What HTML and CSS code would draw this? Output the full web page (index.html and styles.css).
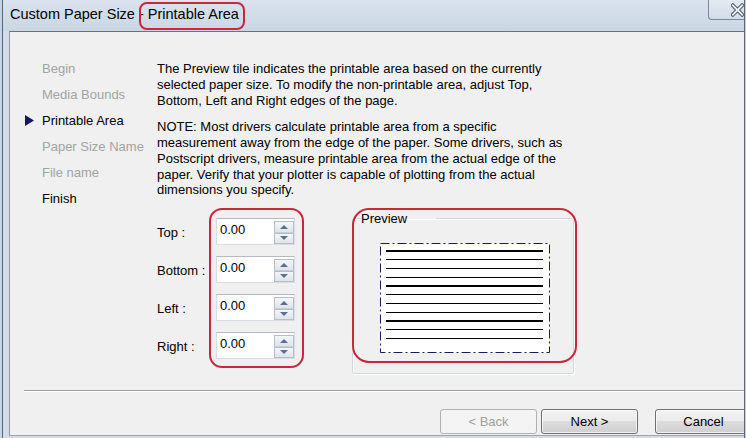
FILE: index.html
```html
<!DOCTYPE html>
<html>
<head>
<meta charset="utf-8">
<link rel="stylesheet" href="styles.css">
</head>
<body>
<div class="window">
  <div class="titlebar">
    <span class="title">Custom Paper Size - Printable Area</span>
    <div class="close-btn">
      <svg width="14" height="14" viewBox="0 0 14 14">
        <path d="M2 2 L12 12 M12 2 L2 12" stroke="#4a5562" stroke-width="4" stroke-linecap="square" fill="none"/>
        <path d="M2 2 L12 12 M12 2 L2 12" stroke="#f2f5f9" stroke-width="2" stroke-linecap="square" fill="none"/>
      </svg>
    </div>
  </div>
  <div class="client">
    <div class="main">
      <ul class="nav">
        <li class="nav-item disabled"><span class="marker"></span>Begin</li>
        <li class="nav-item disabled"><span class="marker"></span>Media Bounds</li>
        <li class="nav-item active"><span class="marker"><svg width="9" height="11" viewBox="0 0 9 11"><path d="M0 0 L9 5.5 L0 11 Z" fill="#16166a"/></svg></span>Printable Area</li>
        <li class="nav-item disabled"><span class="marker"></span>Paper Size Name</li>
        <li class="nav-item disabled"><span class="marker"></span>File name</li>
        <li class="nav-item"><span class="marker"></span>Finish</li>
      </ul>
      <div class="content">
        <p class="para">The Preview tile indicates the printable area based on the currently selected paper size. To modify the non-printable area, adjust Top, Bottom, Left and Right edges of the page.</p>
        <p class="para note">NOTE: Most drivers calculate printable area from a specific measurement away from the edge of the paper. Some drivers, such as Postscript drivers, measure printable area from the actual edge of the paper. Verify that your plotter is capable of plotting from the actual dimensions you specify.</p>
        <div class="settings">
          <div class="fields">
            <div class="field-row">
              <span class="field-label">Top :</span>
              <div class="spin-field"><span class="spin-value">0.00</span><span class="spinner"><span class="spin-btn up"></span><span class="spin-btn down"></span></span></div>
            </div>
            <div class="field-row">
              <span class="field-label">Bottom :</span>
              <div class="spin-field"><span class="spin-value">0.00</span><span class="spinner"><span class="spin-btn up"></span><span class="spin-btn down"></span></span></div>
            </div>
            <div class="field-row">
              <span class="field-label">Left :</span>
              <div class="spin-field"><span class="spin-value">0.00</span><span class="spinner"><span class="spin-btn up"></span><span class="spin-btn down"></span></span></div>
            </div>
            <div class="field-row">
              <span class="field-label">Right :</span>
              <div class="spin-field"><span class="spin-value">0.00</span><span class="spinner"><span class="spin-btn up"></span><span class="spin-btn down"></span></span></div>
            </div>
          </div>
          <fieldset class="preview">
            <legend class="preview-legend">Preview</legend>
            <svg class="page" width="170" height="110" viewBox="0 0 170 110">
              <rect x="0" y="0" width="170" height="110" fill="#ffffff"/>
              <rect x="0.5" y="0.5" width="169" height="109" fill="none" stroke="#1c1c58" stroke-width="1" stroke-dasharray="9 3 2 3"/>
              <g stroke="#000" fill="none">
                <line x1="6" y1="8" x2="163" y2="8" stroke-width="2"/>
                <line x1="6" y1="16.5" x2="163" y2="16.5" stroke-width="1"/>
                <line x1="6" y1="25.5" x2="163" y2="25.5" stroke-width="1"/>
                <line x1="6" y1="34.5" x2="163" y2="34.5" stroke-width="1"/>
                <line x1="6" y1="43" x2="163" y2="43" stroke-width="2"/>
                <line x1="6" y1="51.5" x2="163" y2="51.5" stroke-width="1"/>
                <line x1="6" y1="60.5" x2="163" y2="60.5" stroke-width="1"/>
                <line x1="6" y1="69.5" x2="163" y2="69.5" stroke-width="1"/>
                <line x1="6" y1="78" x2="163" y2="78" stroke-width="2"/>
                <line x1="6" y1="86.5" x2="163" y2="86.5" stroke-width="1"/>
                <line x1="6" y1="95.5" x2="163" y2="95.5" stroke-width="1"/>
              </g>
            </svg>
          </fieldset>
        </div>
      </div>
    </div>
    <div class="separator"></div>
    <div class="buttons">
      <button class="btn disabled">&lt; Back</button>
      <button class="btn">Next &gt;</button>
      <button class="btn cancel">Cancel</button>
    </div>
  </div>
</div>
<div class="mark mark-title"></div>
<div class="mark mark-fields"></div>
<div class="mark mark-preview"></div>
</body>
</html>
```

FILE: styles.css
```css
* { box-sizing: border-box; }
html, body {
  margin: 0;
  padding: 0;
}
body {
  width: 746px;
  height: 438px;
  overflow: hidden;
  position: relative;
  background: #c4d4e6;
  font-family: "Liberation Sans", Arial, sans-serif;
  font-size: 13px;
  color: #000;
}
.window {
  margin-left: 2px;
  width: 743px;
  height: 438px;
  border-left: 1px solid #5a6674;
  border-right: 1px solid #5a6674;
  background: linear-gradient(#dae3ee, #cbd6e4 31px, #d2dce8 31px);
  display: flex;
  flex-direction: column;
}
.titlebar {
  height: 31px;
  flex: none;
  display: flex;
  align-items: flex-start;
  padding-left: 7px;
}
.title {
  font-size: 14.5px;
  line-height: 17px;
  margin-top: 6px;
  color: #000;
}
.close-btn {
  margin-left: auto;
  margin-top: -1px;
  width: 36px;
  height: 21px;
  border: 1px solid #7d8997;
  border-right: none;
  border-radius: 0 0 0 4px;
  background: linear-gradient(#e3eaf2, #d2dce8);
  display: flex;
  align-items: center;
  padding-left: 22px;
}
.client {
  margin-left: 6px;
  height: 405px;
  flex: none;
  border-left: 1px solid #8a97a5;
  border-top: 1px solid #68737f;
  border-bottom: 1px solid #9aa5b1;
  background: #f0f0f0;
  overflow: hidden;
  display: flex;
  flex-direction: column;
}
.main {
  height: 358px;
  flex: none;
  display: flex;
}
.nav {
  list-style: none;
  margin: 0;
  padding: 23px 0 0 0;
  width: 147px;
  flex: none;
}
.nav-item {
  display: flex;
  align-items: center;
  height: 26px;
  white-space: nowrap;
}
.nav-item.disabled { color: #a3a3a3; }
.marker {
  width: 32px;
  flex: none;
  display: flex;
  align-items: center;
  padding-left: 15px;
}
.content {
  flex: 1;
  padding-top: 29px;
}
.para {
  margin: 0;
  line-height: 15.75px;
  width: 420px;
}
.note { margin-top: 11px; }
.settings {
  margin-top: 13px;
  display: flex;
  align-items: flex-start;
}
.fields {
  padding-top: 7px;
  display: flex;
  flex-direction: column;
  gap: 11px;
  width: 195px;
  flex: none;
}
.field-row {
  display: flex;
  align-items: center;
}
.field-label {
  width: 59px;
  flex: none;
  padding-top: 1px;
}
.spin-field {
  width: 79px;
  height: 27px;
  background: #fff;
  border: 1px solid #d9dde3;
  border-top-color: #b5b9c0;
  display: flex;
  align-items: flex-start;
  justify-content: space-between;
}
.spin-value {
  padding: 3px 0 0 3px;
  line-height: 16px;
}
.spinner {
  width: 20px;
  margin-top: 2px;
  display: flex;
  flex-direction: column;
}
.spin-btn {
  height: 11.5px;
  border: 1px solid #b6bdc6;
  background: linear-gradient(#f4f6f9, #dfe4ea);
  display: flex;
  align-items: center;
  justify-content: center;
}
.spin-btn.up { border-bottom-color: #c8ced6; }
.spin-btn::after {
  content: "";
  width: 0;
  height: 0;
  border-left: 4px solid transparent;
  border-right: 4px solid transparent;
}
.spin-btn.up::after { border-bottom: 4px solid #5a6f91; }
.spin-btn.down::after { border-top: 4px solid #5a6f91; }
.preview {
  margin: 0;
  padding: 0 0 0 27px;
  width: 222px;
  height: 163px;
  border: 1px solid #d3d8dd;
  border-radius: 2px;
  box-shadow: inset 1px 1px 0 #fff, 1px 1px 0 #fff;
}
.preview-legend {
  margin-left: 6px;
  padding: 0 2px;
  line-height: 15px;
  position: relative;
  left: -27px;
}
.page {
  display: block;
  margin-top: 17px;
}
.separator {
  margin-left: 14px;
  height: 2px;
  border-top: 1px solid #a0a0a0;
  border-bottom: 1px solid #ffffff;
  flex: none;
}
.buttons {
  margin-top: 17px;
  padding-left: 430px;
  display: flex;
  flex: none;
}
.btn {
  font-family: "Liberation Sans", Arial, sans-serif;
  font-size: 13px;
  color: #000;
  height: 25px;
  width: 97px;
  flex: none;
  border: 1px solid #707070;
  border-radius: 3px;
  background: linear-gradient(#f2f2f2 0%, #ebebeb 49%, #dddddd 50%, #cfcfcf 100%);
  box-shadow: inset 0 0 0 1px rgba(255,255,255,0.7);
  padding: 0;
  margin-right: 4px;
}
.btn.disabled {
  color: #a0a0a0;
  border-color: #adb2b5;
  background: #f4f4f4;
  box-shadow: none;
}
.btn.cancel { margin-left: 13px; }
.mark {
  position: absolute;
  border: 2.5px solid #c8283a;
  pointer-events: none;
}
.mark-title {
  left: 139px;
  top: 2px;
  width: 106px;
  height: 28px;
  border-radius: 8px;
}
.mark-fields {
  left: 209px;
  top: 208px;
  width: 95px;
  height: 160px;
  border-radius: 13px;
}
.mark-preview {
  left: 352px;
  top: 208px;
  width: 225px;
  height: 155px;
  border-radius: 17px;
}
```
